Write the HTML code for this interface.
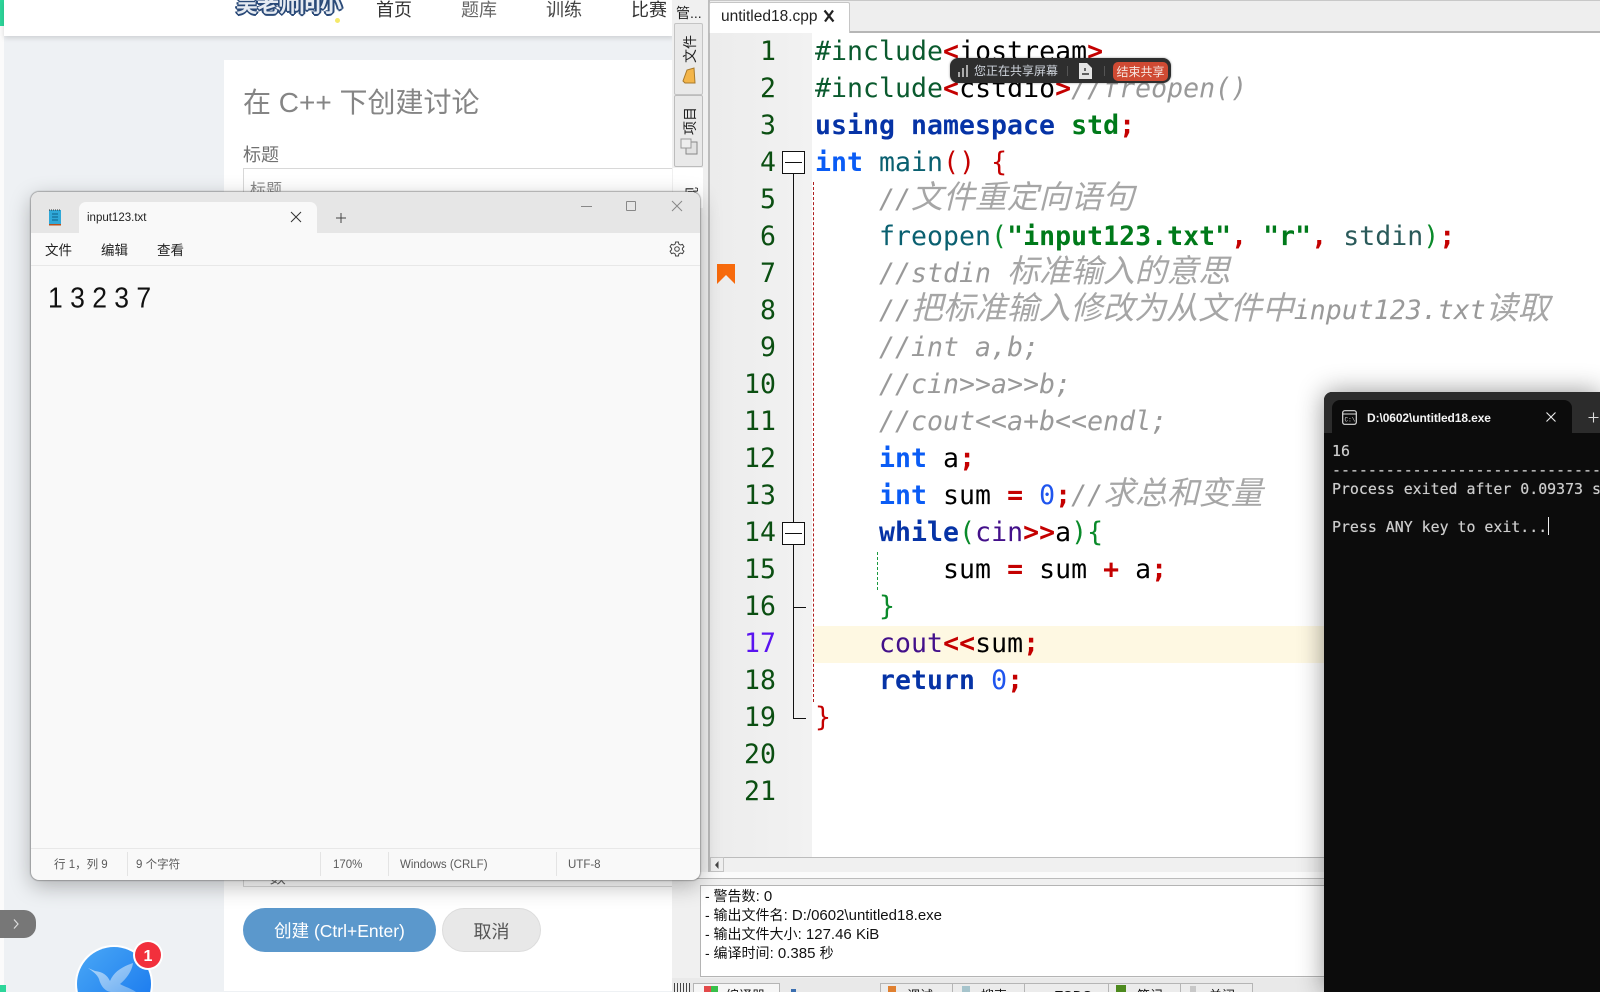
<!DOCTYPE html>
<html lang="zh">
<head>
<meta charset="utf-8">
<title>Screen</title>
<style>
html,body{margin:0;padding:0;width:1600px;height:992px;overflow:hidden;background:#eef1f4;}
*{box-sizing:border-box;}
body{position:relative;font-family:"Liberation Sans","Noto Sans CJK SC",sans-serif;}
.a{position:absolute;white-space:pre;}
/* code */
.code{position:absolute;left:815px;top:34px;font-family:"DejaVu Sans Mono","Noto Sans CJK SC",monospace;font-size:26.5px;letter-spacing:.05px;color:#000;}
.l{position:absolute;left:0;height:37px;line-height:36px;white-space:pre;}
.num{position:absolute;left:716px;width:60px;text-align:right;top:0;height:37px;line-height:36px;font-family:"DejaVu Sans Mono",monospace;font-size:26.5px;letter-spacing:.05px;color:#0b4f12;}
.k{font-weight:bold;color:#0633a6;}
.i{font-weight:bold;color:#0a5cf5;}
.r{font-weight:bold;color:#c40000;}
.rn{color:#c40000;}
.g{color:#0a8a2a;}
.s{font-weight:bold;color:#007a1a;}
.p{color:#0a5a2e;}
.f{color:#0a6070;}
.v{color:#2a5a5a;}
.c{font-style:italic;color:#999;}
.c b{font-family:"Noto Sans CJK SC",sans-serif;font-weight:normal;font-size:31.9px;letter-spacing:0;line-height:0;color:#a6a6a6;}
.n{color:#1f55ee;}
.pu{color:#43108a;}
.sep{position:absolute;top:852px;height:24px;width:1px;background:#e4e4e4;}
.st{position:absolute;top:856px;height:18px;line-height:18px;font-size:11.5px;color:#5a5a5a;white-space:pre;}
.btab{position:absolute;top:983px;height:9px;background:#ececec;border:1px solid #b5b5b5;border-bottom:0;overflow:hidden;}
.btab span{position:absolute;top:4px;font-size:13px;line-height:16px;color:#111;}
.m i{font-style:normal;font-size:15px;}
</style>
</head>
<body>

<!-- Browser page -->
<div class="a" style="left:0;top:0;width:4px;height:992px;background:#fbfbfb;"></div>
<div class="a" style="left:0;top:0;width:6px;height:26px;background:#2dd69a;"></div>
<div class="a" style="left:0;top:985px;width:6px;height:7px;background:#2dd69a;"></div>
<div class="a" style="left:4px;top:0;width:670px;height:36px;background:#fff;box-shadow:0 2px 5px rgba(0,0,0,.14);overflow:hidden;">
  <div class="a" style="left:232px;top:-7px;font-size:22px;line-height:24px;font-weight:bold;color:#e6ebf2;letter-spacing:-1px;text-shadow:1px 0 0 #2b4a78,-1px 0 0 #2b4a78,0 1px 0 #2b4a78,0 -1px 0 #2b4a78,1px 1px 0 #2b4a78,-1px 1px 0 #2b4a78,2px 0 0 #2b4a78,-2px 0 0 #2b4a78,0 2px 0 #2b4a78;">吴老师问小</div>
  <div class="a" style="left:372px;top:-4px;font-size:18px;color:#333;">首页</div>
  <div class="a" style="left:457px;top:-4px;font-size:18px;color:#666;">题库</div>
  <div class="a" style="left:542px;top:-4px;font-size:18px;color:#444;">训练</div>
  <div class="a" style="left:627px;top:-4px;font-size:18px;color:#333;">比赛</div>
  <div class="a" style="left:331px;top:18px;width:5px;height:5px;border-radius:50%;background:#f5e96a;"></div>
</div>

<div class="a" style="left:224px;top:60px;width:448px;height:931px;background:#fff;overflow:hidden;">
  <div class="a" style="left:19px;top:23px;font-size:28px;line-height:40px;color:#858585;">在 C++ 下创建讨论</div>
  <div class="a" style="left:19px;top:82px;font-size:18px;line-height:26px;color:#707070;">标题</div>
  <div class="a" style="left:19px;top:108px;width:440px;height:719px;border:1px solid #d8d8d8;"></div>
  <div class="a" style="left:26px;top:120px;font-size:16px;line-height:22px;color:#888;">标题</div>
  <div class="a" style="left:36px;top:808px;font-size:16px;line-height:22px;color:#666;">- 数</div>
  <div class="a" style="left:19px;top:848px;width:193px;height:44px;border-radius:22px;background:#5b98cc;color:#fff;font-size:17.5px;line-height:47px;text-align:center;">创建 (Ctrl+Enter)</div>
  <div class="a" style="left:218px;top:848px;width:99px;height:44px;border-radius:22px;background:#e8e8e8;border:1px solid #dcdcdc;color:#555;font-size:18px;line-height:46px;text-align:center;">取消</div>
</div>

<div class="a" style="left:0;top:910px;width:36px;height:28px;background:#777;border-radius:0 12px 12px 0;">
  <svg width="36" height="28" style="position:absolute;left:0;top:0"><path d="M14 9.5l4 4.5-4 4.5" fill="none" stroke="#ddd" stroke-width="1.2"/></svg>
</div>

<svg class="a" style="left:70px;top:940px;" width="100" height="52" viewBox="0 0 100 52">
  <defs>
    <linearGradient id="bl" x1="0" y1="0" x2="1" y2="1"><stop offset="0" stop-color="#4aa8f5"/><stop offset="1" stop-color="#1474ee"/></linearGradient>
    <linearGradient id="wg" x1="0" y1="0" x2="1" y2="1"><stop offset="0" stop-color="#cfe6fb"/><stop offset="1" stop-color="#7fb8f2"/></linearGradient>
  </defs>
  <circle cx="44" cy="44" r="39" fill="#fff"/>
  <circle cx="44" cy="44" r="37" fill="url(#bl)"/>
  <path d="M63 23C54 26 44 31 40 41C37 35 33 32 25 31L18 28C22 31 27 34 29 39C31 47 36 52 42 52L66 52C60 48 53 46 50 44C57 38 62 31 63 23Z" fill="url(#wg)" opacity=".8"/>
  <circle cx="78" cy="15" r="15" fill="#fff"/>
  <circle cx="78" cy="15" r="13" fill="#f2303c"/>
  <text x="78" y="21" font-family="Liberation Sans" font-size="16" font-weight="bold" fill="#fff" text-anchor="middle">1</text>
</svg>

<!-- Dev-C++ -->
<div class="a" style="left:672px;top:0;width:928px;height:992px;background:#f0f0f0;overflow:hidden;">
  <div class="a" style="left:4px;top:3px;font-size:14px;line-height:20px;color:#222;">管...</div>
  <!-- side tabs -->
  <div class="a" style="left:2px;top:23px;width:29px;height:72px;background:#e9e9e9;border:1px solid #c4c4c4;border-radius:2px;"></div>
  <div class="a" style="left:2px;top:95px;width:29px;height:72px;background:#e9e9e9;border:1px solid #bcbcbc;border-radius:2px;"></div>
  <div class="a" style="left:1px;top:168px;width:30px;height:40px;background:#fff;"></div>
  <div class="a" style="left:4px;top:40px;width:28px;height:18px;font-size:14px;line-height:18px;color:#222;transform:rotate(-90deg);letter-spacing:0;">文件</div>
  <div class="a" style="left:4px;top:112px;width:28px;height:18px;font-size:14px;line-height:18px;color:#222;transform:rotate(-90deg);">项目</div>
  <svg class="a" style="left:10px;top:67px;" width="16" height="18"><path d="M3 16L1 14L5 3L12 1L13 16Z" fill="#f3b54a" stroke="#a8792a"/></svg>
  <svg class="a" style="left:8px;top:137px;" width="18" height="18"><rect x="6" y="5" width="11" height="12" fill="#e2e2e2" stroke="#888"/><rect x="1" y="2" width="10" height="9" fill="#eee" stroke="#999"/></svg>
  <div class="a" style="left:6px;top:178px;width:28px;height:18px;font-size:14px;line-height:18px;color:#222;transform:rotate(-90deg);">视</div>
  <div class="a" style="left:36px;top:0;width:2px;height:878px;background:#bcbcbc;"></div>

  <!-- editor tabs -->
  <div class="a" style="left:38px;top:0;width:890px;height:33px;background:#eeeeee;border-top:1px solid #c8c8c8;border-bottom:2px solid #b6b6b6;"></div>
  <div class="a" style="left:37px;top:2px;width:141px;height:31px;background:#fff;border:1px solid #c6c6c6;border-bottom:0;border-radius:2px 2px 0 0;"></div>
  <div class="a" style="left:49px;top:7px;font-size:15.5px;line-height:20px;color:#222;">untitled18.cpp</div>
  <svg class="a" style="left:150px;top:9px;" width="14" height="14"><path d="M2.5 1.5L11.5 12.5M11 1.5L3 12.5" stroke="#222" stroke-width="2.2" fill="none"/></svg>

  <!-- editor surface -->
  <div class="a" style="left:38px;top:33px;width:890px;height:824px;background:#fff;"></div>
  <div class="a" style="left:38px;top:33px;width:102px;height:824px;background:linear-gradient(90deg,#ececec,#f2f2f2);"></div>
  <div class="a" style="left:142px;top:626px;width:786px;height:37px;background:#fef8e2;"></div>
  <!-- scrollbar -->
  <div class="a" style="left:38px;top:857px;width:890px;height:15px;background:#f0f0f0;border-top:1px solid #bcbcbc;"></div>
  <div class="a" style="left:38px;top:857px;width:14px;height:15px;background:#f0f0f0;border:1px solid #c4c4c4;"></div>
  <svg class="a" style="left:42px;top:860px;" width="6" height="10"><path d="M4.5 1L1 5L4.5 9Z" fill="#444"/></svg>
  <div class="a" style="left:0;top:872px;width:928px;height:6px;background:#fbfbfb;"></div>
  <div class="a" style="left:0;top:878px;width:928px;height:1px;background:#bcbcbc;"></div>
  <!-- messages -->
  <div class="a" style="left:28px;top:885px;width:900px;height:92px;background:#fff;border:1px solid #b4b4b4;"></div>
  <div class="a m" style="left:33px;top:887px;font-size:14px;line-height:19px;color:#111;">- 警告数<i>: 0</i>
- 输出文件名<i>: D:/0602\untitled18.exe</i>
- 输出文件大小<i>: 127.46 KiB</i>
- 编译时间<i>: 0.385 </i>秒</div>
  <!-- bottom tabs -->
  <div class="a" style="left:0;top:978px;width:928px;height:14px;background:#e9e9e9;"></div>
  <div class="a" style="left:2px;top:983px;width:16px;height:9px;background:repeating-linear-gradient(90deg,#444 0 1px,#eee 1px 3px);"></div>
  <div class="a" style="left:21px;top:983px;width:87px;height:9px;background:#f6f6f6;border:1px solid #b5b5b5;border-bottom:0;overflow:hidden;"><span class="a" style="left:32px;top:4px;font-size:13px;line-height:16px;color:#111;">编译器</span></div>
  <div class="a" style="left:32px;top:986px;width:7px;height:6px;background:#e34a4a;"></div>
  <div class="a" style="left:39px;top:986px;width:7px;height:6px;background:#38c04a;"></div>
  <div class="a" style="left:119px;top:989px;width:5px;height:3px;background:#3b6fb0;"></div>
  <div class="btab" style="left:208px;width:73px;"><span style="left:26px">调试</span></div>
  <div class="btab" style="left:280px;width:73px;"><span style="left:28px">搜索</span></div>
  <div class="btab" style="left:352px;width:85px;"><span style="left:30px">TODO</span></div>
  <div class="btab" style="left:436px;width:73px;"><span style="left:28px">笔记</span></div>
  <div class="btab" style="left:508px;width:73px;"><span style="left:28px">关闭</span></div>
  <div class="a" style="left:216px;top:986px;width:8px;height:6px;background:#e08030;"></div>
  <div class="a" style="left:290px;top:986px;width:8px;height:6px;background:#a6c4cc;"></div>
  <div class="a" style="left:444px;top:985px;width:10px;height:7px;background:#4d8a1e;"></div>
  <div class="a" style="left:518px;top:986px;width:6px;height:6px;background:#c8c8c8;"></div>
</div>

<!-- bookmark -->
<svg class="a" style="left:717px;top:264px;" width="18" height="20"><path d="M0 0H18V20L9 11L0 20Z" fill="#f76a0c"/></svg>

<!-- fold marks -->
<div class="a" style="left:793px;top:174px;width:1px;height:544px;background:#111;"></div>
<div class="a" style="left:793px;top:718px;width:13px;height:1px;background:#111;"></div>
<div class="a" style="left:793px;top:607px;width:13px;height:1px;background:#111;"></div>
<div class="a" style="left:782px;top:151px;width:23px;height:23px;background:#fff;border:1px solid #111;"><div class="a" style="left:2px;top:10px;width:17px;height:1px;background:#111;"></div></div>
<div class="a" style="left:782px;top:522px;width:23px;height:23px;background:#fff;border:1px solid #111;"><div class="a" style="left:2px;top:10px;width:17px;height:1px;background:#111;"></div></div>
<div class="a" style="left:813px;top:182px;width:0;height:520px;border-left:1px dashed #b02020;"></div>
<div class="a" style="left:877px;top:552px;width:0;height:38px;border-left:1px dashed #1a9a40;"></div>

<!-- line numbers -->
<div class="num" style="top:34px">1</div>
<div class="num" style="top:71px">2</div>
<div class="num" style="top:108px">3</div>
<div class="num" style="top:145px">4</div>
<div class="num" style="top:182px">5</div>
<div class="num" style="top:219px">6</div>
<div class="num" style="top:256px">7</div>
<div class="num" style="top:293px">8</div>
<div class="num" style="top:330px">9</div>
<div class="num" style="top:367px">10</div>
<div class="num" style="top:404px">11</div>
<div class="num" style="top:441px">12</div>
<div class="num" style="top:478px">13</div>
<div class="num" style="top:515px">14</div>
<div class="num" style="top:552px">15</div>
<div class="num" style="top:589px">16</div>
<div class="num" style="top:626px;color:#5a14f0">17</div>
<div class="num" style="top:663px">18</div>
<div class="num" style="top:700px">19</div>
<div class="num" style="top:737px">20</div>
<div class="num" style="top:774px">21</div>

<!-- code -->
<div class="code">
<div class="l" style="top:0"><span class="p">#include</span><span class="r">&lt;</span>iostream<span class="r">&gt;</span></div>
<div class="l" style="top:37px"><span class="p">#include</span><span class="r">&lt;</span>cstdio<span class="r">&gt;</span><span class="c">//freopen()</span></div>
<div class="l" style="top:74px"><span class="k">using namespace</span> <span class="s">std</span><span class="r">;</span></div>
<div class="l" style="top:111px"><span class="i">int</span> <span class="f">main</span><span class="rn">() {</span></div>
<div class="l" style="top:148px">    <span class="c">//<b>文件重定向语句</b></span></div>
<div class="l" style="top:185px">    <span class="f">freopen</span><span class="g">(</span><span class="s">"input123.txt"</span><span class="r">,</span> <span class="s">"r"</span><span class="r">,</span> <span class="v">stdin</span><span class="g">)</span><span class="r">;</span></div>
<div class="l" style="top:222px">    <span class="c">//stdin <b>标准输入的意思</b></span></div>
<div class="l" style="top:259px">    <span class="c">//<b>把标准输入修改为从文件中</b>input123.txt<b>读取</b></span></div>
<div class="l" style="top:296px">    <span class="c">//int a,b;</span></div>
<div class="l" style="top:333px">    <span class="c">//cin&gt;&gt;a&gt;&gt;b;</span></div>
<div class="l" style="top:370px">    <span class="c">//cout&lt;&lt;a+b&lt;&lt;endl;</span></div>
<div class="l" style="top:407px">    <span class="i">int</span> a<span class="r">;</span></div>
<div class="l" style="top:444px">    <span class="i">int</span> sum <span class="r">=</span> <span class="n">0</span><span class="r">;</span><span class="c">//<b>求总和变量</b></span></div>
<div class="l" style="top:481px">    <span class="k">while</span><span class="g">(</span><span class="pu">cin</span><span class="r">&gt;&gt;</span>a<span class="g">){</span></div>
<div class="l" style="top:518px">        sum <span class="r">=</span> sum <span class="r">+</span> a<span class="r">;</span></div>
<div class="l" style="top:555px">    <span class="g">}</span></div>
<div class="l" style="top:592px">    <span class="pu">cout</span><span class="r">&lt;&lt;</span>sum<span class="r">;</span></div>
<div class="l" style="top:629px">    <span class="k">return</span> <span class="n">0</span><span class="r">;</span></div>
<div class="l" style="top:666px"><span class="rn">}</span></div>
</div>

<!-- sharing pill -->
<div class="a" style="left:950px;top:58px;width:221px;height:25px;background:#2e2e2e;border-radius:8px;box-shadow:0 0 2px rgba(0,0,0,.4);">
  <div class="a" style="left:8px;top:14px;width:2px;height:5px;background:#aaa;"></div>
  <div class="a" style="left:12px;top:10px;width:2px;height:9px;background:#aaa;"></div>
  <div class="a" style="left:16px;top:7px;width:2px;height:12px;background:#aaa;"></div>
  <div class="a" style="left:24px;top:4px;font-size:12px;line-height:18px;color:#cfd4dc;">您正在共享屏幕</div>
  <div class="a" style="left:117px;top:8px;width:1px;height:10px;background:#555;"></div>
  <svg class="a" style="left:128px;top:5px;" width="14" height="16"><path d="M1 0H9L14 5V16H1Z" fill="#e4e4e4"/><path d="M4 11H11M7 5V8" stroke="#333" stroke-width="1.4"/></svg>
  <div class="a" style="left:154px;top:8px;width:1px;height:10px;background:#555;"></div>
  <div class="a" style="left:163px;top:4px;width:55px;height:19px;background:#cf4a33;border-radius:5px;color:#f6e6e0;font-size:12px;line-height:20px;text-align:center;">结束共享</div>
</div>

<!-- Notepad -->
<div class="a" style="left:31px;top:192px;width:669px;height:688px;background:#f9f9f9;border-radius:8px;box-shadow:0 0 1px 1px rgba(90,90,90,.45),0 6px 22px rgba(0,0,0,.28);overflow:hidden;">
  <div class="a" style="left:0;top:0;width:669px;height:41px;background:#e6e6e6;"></div>
  <div class="a" style="left:48px;top:10px;width:238px;height:31px;background:#f9f9f9;border-radius:7px 7px 0 0;"></div>
  <svg class="a" style="left:18px;top:17px;" width="13" height="17"><rect x="0" y="1" width="12" height="15" fill="#2fa8d8"/><rect x="0" y="15" width="12" height="1.5" fill="#b8501c"/><path d="M0 1h12" stroke="#333" stroke-dasharray="1 1"/><path d="M3 5h6M3 8h6M3 11h6" stroke="#0d5f87"/></svg>
  <div class="a" style="left:56px;top:17px;font-size:11.5px;line-height:18px;color:#222;">input123.txt</div>
  <svg class="a" style="left:259px;top:19px;" width="12" height="12"><path d="M1 1L11 11M11 1L1 11" stroke="#333" stroke-width="1"/></svg>
  <svg class="a" style="left:304px;top:20px;" width="12" height="12"><path d="M6 1V11M1 6H11" stroke="#444" stroke-width="1"/></svg>
  <div class="a" style="left:550px;top:14px;width:11px;height:1px;background:#888;"></div>
  <div class="a" style="left:595px;top:9px;width:10px;height:10px;border:1px solid #888;border-radius:1px;"></div>
  <svg class="a" style="left:640px;top:8px;" width="12" height="12"><path d="M1 1L11 11M11 1L1 11" stroke="#888" stroke-width="1"/></svg>

  <div class="a" style="left:14px;top:49px;font-size:13.5px;line-height:20px;color:#222;">文件</div>
  <div class="a" style="left:70px;top:49px;font-size:13.5px;line-height:20px;color:#222;">编辑</div>
  <div class="a" style="left:126px;top:49px;font-size:13.5px;line-height:20px;color:#222;">查看</div>
  <svg class="a" style="left:638px;top:49px;" width="16" height="16" viewBox="0 0 16 16"><path d="M6.600 1h2.800l.4 2 1.700 1 2-.6 1.400 2.400-1.500 1.400v1.600l1.500 1.400-1.400 2.400-2-.6-1.700 1-.4 2H6.600l-.4-2-1.700-1-2 .6L1.100 10.200l1.500-1.400V7.200L1.100 5.800 2.500 3.400l2 .6 1.700-1z" fill="none" stroke="#444"/><circle cx="8" cy="8" r="2.300" fill="none" stroke="#444"/></svg>
  <div class="a" style="left:0;top:73px;width:669px;height:1px;background:#e8e8e8;"></div>

  <div class="a" style="left:17px;top:88px;font-size:26.500px;line-height:36px;color:#111;transform:scaleY(1.08);transform-origin:0 50%;">1 3 2 3 7</div>

  <div class="a" style="left:0;top:656px;width:669px;height:1px;background:#e8e8e8;"></div>
</div>
<div class="st" style="left:54px">行 1，列 9</div>
<div class="sep" style="left:127px"></div>
<div class="st" style="left:136px">9 个字符</div>
<div class="sep" style="left:320px"></div>
<div class="st" style="left:333px">170%</div>
<div class="sep" style="left:388px"></div>
<div class="st" style="left:400px">Windows (CRLF)</div>
<div class="sep" style="left:556px"></div>
<div class="st" style="left:568px">UTF-8</div>

<!-- Console -->
<div class="a" style="left:1324px;top:392px;width:276px;height:600px;background:#0c0c0c;border-radius:8px 0 0 0;box-shadow:0 0 26px rgba(0,0,0,.42);overflow:hidden;">
  <div class="a" style="left:0;top:0;width:276px;height:41px;background:#2c2c2c;"></div>
  <div class="a" style="left:8px;top:8px;width:240px;height:33px;background:#0c0c0c;border-radius:8px 8px 0 0;"></div>
  <svg class="a" style="left:18px;top:18px;" width="15" height="15"><rect x=".7" y=".7" width="13.600" height="13.600" rx="2" fill="none" stroke="#ddd" stroke-width="1.200"/><path d="M1 4H14" stroke="#ddd"/><text x="2.500" y="11.500" font-family="Liberation Mono" font-size="6" fill="#ddd">C:\</text></svg>
  <div class="a" style="left:43px;top:17px;font-size:12px;font-weight:bold;line-height:18px;color:#f2f2f2;letter-spacing:-.1px;">D:\0602\untitled18.exe</div>
  <svg class="a" style="left:222px;top:20px;" width="10" height="10"><path d="M.5 .5L9.500 9.500M9.500 .5L.5 9.500" stroke="#eee" stroke-width="1.100"/></svg>
  <svg class="a" style="left:264px;top:20px;" width="12" height="11"><path d="M5.500 .5V10.500M.5 5.500H10.500" stroke="#ddd" stroke-width="1.100"/></svg>
  <div class="a" style="left:8px;top:50px;font-family:'DejaVu Sans Mono',monospace;font-size:14.9px;line-height:19px;color:#ccc;text-shadow:0 0 .5px #ccc;">16
--------------------------------
Process exited after 0.09373 seconds

Press ANY key to exit...</div>
  <div class="a" style="left:224px;top:125px;width:1px;height:18px;background:#eee;"></div>
</div>

</body>
</html>
